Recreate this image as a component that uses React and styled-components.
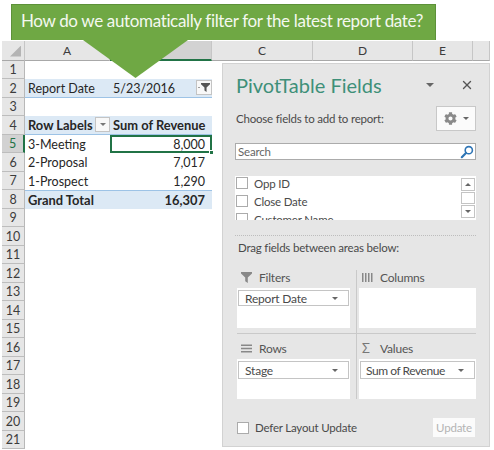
import React from 'react'
import styled, { createGlobalStyle } from 'styled-components'
import { X } from 'lucide-react'
import { FaCog } from 'react-icons/fa'

const Global = createGlobalStyle`
  html, body { margin: 0; padding: 0; background: #fff; }
  * { box-sizing: border-box; }
  body { font-family: "Lato", "Open Sans", sans-serif; color: #262626; }
`

const Page = styled.div`
  position: relative;
  width: 494px;
  height: 450px;
  overflow: hidden;
  background: #fff;
`

const Banner = styled.div`
  position: relative;
  z-index: 3;
  width: 425px;
  height: 36px;
  margin: 4px 0 1px 11px;
  padding: 0 0 4px 9px;
  display: flex;
  align-items: center;
  background: #6fa844;
  border: 1px solid #5d9139;
  border-bottom: none;
  color: #f4f8f0;
  font-size: 17px;
  letter-spacing: -0.35px;
  white-space: nowrap;
`

const Pointer = styled.div`
  position: absolute;
  left: 71px;
  top: 35px;
  width: 105px;
  height: 38px;
  background: #6fa844;
  clip-path: polygon(0 0, 100% 0, 50% 100%);
`

const Sheet = styled.div`
  position: relative;
  margin-left: 2px;
  width: 488px;
`

const HeaderRow = styled.div`
  display: flex;
  height: 19.5px;
`

const Corner = styled.div`
  position: relative;
  width: 23px;
  background: #e6e6e6;
  border-right: 1px solid #c6c6c6;
  border-bottom: 1px solid #a8a8a8;
  &::after {
    content: '';
    position: absolute;
    right: 3px;
    bottom: 3px;
    width: 11px;
    height: 11px;
    background: #b4b4b4;
    clip-path: polygon(100% 0, 100% 100%, 0 100%);
  }
`

const ColHead = styled.div`
  width: ${p => p.$w}px;
  display: flex;
  align-items: center;
  justify-content: center;
  font-size: 12px;
  color: #3c3c3c;
  background: ${p => (p.$active ? '#d2d2d2' : '#e6e6e6')};
  border-right: 1px solid #c6c6c6;
  border-bottom: ${p => (p.$active ? '2px solid #217346' : '1px solid #a8a8a8')};
`

const Row = styled.div`
  display: flex;
  height: 18.5px;
`

const RowNum = styled.div`
  width: 23px;
  padding-top: 1px;
  display: flex;
  align-items: center;
  justify-content: center;
  font-size: 12.5px;
  color: ${p => (p.$active ? '#217346' : '#3c3c3c')};
  background: ${p => (p.$active ? '#d2d2d2' : '#e6e6e6')};
  border-right: ${p => (p.$active ? '2px solid #217346' : '1px solid #b8b8b8')};
  border-bottom: 1px solid #bdbdbd;
`

const Band = styled.div`
  display: flex;
  width: 187px;
  background: ${p => (p.$band ? '#dce9f5' : 'transparent')};
  border-top: ${p => (p.$top ? '1px solid #9dc3e6' : 'none')};
  border-bottom: ${p => (p.$bottom ? '1px solid #9dc3e6' : 'none')};
  font-weight: ${p => (p.$bold ? 700 : 400)};
  font-size: ${p => (p.$bold ? '12.9px' : '12.5px')};
`

const Label = styled.div`
  position: relative;
  width: 85px;
  padding: 1px 0 0 3px;
  display: flex;
  align-items: center;
  white-space: nowrap;
`

const Value = styled.div`
  position: relative;
  width: 102px;
  padding: 1px ${p => (p.$num ? '7px' : '0')} 0 3px;
  display: flex;
  align-items: center;
  justify-content: ${p => (p.$num ? 'flex-end' : 'flex-start')};
  white-space: nowrap;
  outline: ${p => (p.$selected ? '2px solid #217346' : 'none')};
  outline-offset: -2px;
`

const Handle = styled.span`
  position: absolute;
  right: -2px;
  bottom: -2px;
  width: 5px;
  height: 5px;
  background: #217346;
  border: 1px solid #fff;
`

const FilterBtn = styled.span`
  position: absolute;
  right: 0;
  top: 1px;
  width: ${p => (p.$wide ? 16 : 15)}px;
  height: 15px;
  display: flex;
  align-items: center;
  justify-content: center;
  gap: 1px;
  background: #f8f8f8;
  border: 1px solid #c4c4c4;
`

const Panel = styled.aside`
  position: absolute;
  z-index: 2;
  left: 220px;
  top: 22px;
  width: 268px;
  height: 384px;
  padding: 9px 13px 0 12px;
  background: #e6e6e6;
  border: 1px solid #d2d2d2;
  color: #4a4a4a;
  font-size: 11.5px;
  letter-spacing: -0.2px;
`

const PanelHead = styled.div`
  display: flex;
  align-items: center;
  height: 24px;
  padding-left: 1px;
`

const Title = styled.h2`
  flex: 1;
  margin: 0;
  font-size: 20px;
  font-weight: 400;
  letter-spacing: 0;
  color: #3e9079;
`

const Caret = styled.span`
  display: block;
  flex: none;
  width: 0;
  height: 0;
  border-left: ${p => p.$s || 3.5}px solid transparent;
  border-right: ${p => p.$s || 3.5}px solid transparent;
  border-top: ${p => p.$s || 3.5}px solid ${p => p.$c || '#666'};
`

const HeadCaret = styled(Caret)`
  margin-right: 26px;
`

const CloseBtn = styled.span`
  display: flex;
  margin-right: 2px;
  color: #555;
`

const ChooseRow = styled.div`
  display: flex;
  align-items: center;
  justify-content: space-between;
  height: 25px;
  margin-top: 9px;
  padding-left: 1px;
`

const GearBtn = styled.div`
  width: 40px;
  height: 25px;
  display: flex;
  align-items: center;
  justify-content: center;
  gap: 6px;
  background: #fbfbfb;
  border: 1px solid #c8c8c8;
  color: #8a8a8a;
`

const SearchBox = styled.div`
  height: 17px;
  margin-top: 12px;
  padding: 0 1px 0 2px;
  display: flex;
  align-items: center;
  justify-content: space-between;
  background: #fff;
  border: 1px solid #ababab;
  color: #666;
`

const FieldList = styled.div`
  position: relative;
  height: 44px;
  margin-top: 16px;
  padding-top: 1px;
  display: flex;
  flex-direction: column;
  gap: 6px;
  background: #fff;
  overflow: hidden;
`

const FieldRow = styled.label`
  flex: none;
  display: flex;
  align-items: center;
  gap: 6px;
  height: 12px;
  padding-left: 1px;
`

const Check = styled.span`
  flex: none;
  display: block;
  width: 12px;
  height: 12px;
  background: #fff;
  border: 1px solid #ababab;
`

const Scroll = styled.div`
  position: absolute;
  right: 1px;
  top: 2px;
  width: 14px;
  height: 40px;
  display: flex;
  flex-direction: column;
  gap: 1px;
`

const ScrollBtn = styled.div`
  flex: 1;
  display: flex;
  align-items: center;
  justify-content: center;
  background: #fff;
  border: 1px solid #c4c4c4;
`

const UpCaret = styled(Caret)`
  transform: rotate(180deg);
`

const Dashed = styled.div`
  margin-top: 15px;
  border-top: 1px dotted #bdbdbd;
`

const DragText = styled.div`
  height: 16px;
  margin-top: 3px;
  padding-left: 3px;
  display: flex;
  align-items: center;
`

const Areas = styled.div`
  display: grid;
  grid-template-columns: 120px 119px;
  margin-top: 15px;
  margin-left: 2px;
`

const Area = styled.section`
  padding: ${p => (p.$lower ? '7px' : '0')} 0 ${p => (p.$lower ? '0' : '5px')} ${p => (p.$right ? '2px' : '0')};
  border-right: ${p => (p.$right ? 'none' : '1px solid #c9c9c9')};
  border-bottom: ${p => (p.$lower ? 'none' : '1px solid #c9c9c9')};
`

const AreaLabel = styled.div`
  height: 18px;
  padding: 0 0 4px ${p => (p.$right ? '3px' : '4px')};
  display: flex;
  align-items: center;
  gap: 7px;
  font-size: 12px;
  color: #555;
`

const AreaIcon = styled.svg`
  flex: none;
  display: block;
  width: 11px;
  height: 11px;
  fill: #888;
`

const Sigma = styled.span`
  width: 11px;
  font-size: 13px;
  line-height: 1;
  color: #777;
`

const AreaBox = styled.div`
  width: ${p => (p.$right ? '117px' : '113px')};
  height: 40px;
  padding: 2px 1px;
  background: #fff;
`

const Pill = styled.div`
  height: ${p => (p.$tall ? 18 : 16)}px;
  padding: 0 10px 0 ${p => (p.$tight ? 5 : 6)}px;
  display: flex;
  align-items: center;
  justify-content: space-between;
  font-size: 12px;
  letter-spacing: ${p => (p.$tight ? '-0.45px' : '-0.2px')};
  background: #fff;
  border: 1px solid #c4c4c4;
`

const Footer = styled.div`
  display: flex;
  align-items: center;
  justify-content: space-between;
  height: 19px;
  margin-top: 19px;
  margin-left: 2px;
`

const Defer = styled.label`
  display: flex;
  align-items: center;
  gap: 6px;
`

const UpdateBtn = styled.div`
  width: 42px;
  height: 19px;
  margin-right: 1px;
  display: flex;
  align-items: center;
  justify-content: center;
  background: #fbfbfb;
  color: #b4b4b4;
`

const Funnel = ({ size = 11, fill = '#888' }) => (
  <svg width={size} height={size} viewBox="0 0 12 12" style={{ display: 'block', flex: 'none' }}>
    <path d="M0 0h12v1.5L7.4 6v6L4.6 10V6L0 1.5z" fill={fill} />
  </svg>
)

const Magnifier = () => (
  <svg width="14" height="14" viewBox="0 0 14 14" fill="none">
    <circle cx="8.8" cy="5.2" r="3.6" stroke="#2f75b5" strokeWidth="1.6" />
    <path d="M6 8 1.8 12.2" stroke="#2f75b5" strokeWidth="2.2" strokeLinecap="round" />
  </svg>
)

const columns = [
  { name: 'A', w: 85 },
  { name: 'B', w: 102, active: true, blank: true },
  { name: 'C', w: 101 },
  { name: 'D', w: 100 },
  { name: 'E', w: 60 },
  { name: '', w: 17 },
]

const rows = [
  {},
  { band: true, bottom: true, label: 'Report Date', value: '5/23/2016', filter: 'value' },
  {},
  { band: true, bottom: true, bold: true, label: 'Row Labels', value: 'Sum of Revenue', filter: 'label' },
  { label: '3-Meeting', value: '8,000', num: true, selected: true },
  { label: '2-Proposal', value: '7,017', num: true },
  { label: '1-Prospect', value: '1,290', num: true },
  { band: true, top: true, bold: true, label: 'Grand Total', value: '16,307', num: true },
  ...Array.from({ length: 13 }, () => ({})),
]

function App() {
  return (
    <Page>
      <Global />
      <Banner>
        How do we automatically filter for the latest report date?
        <Pointer />
      </Banner>
      <Sheet>
        <HeaderRow>
          <Corner />
          {columns.map((c, i) => (
            <ColHead key={i} $w={c.w} $active={c.active}>{c.blank ? '' : c.name}</ColHead>
          ))}
        </HeaderRow>
        {rows.map((r, i) => (
          <Row key={i}>
            <RowNum $active={r.selected}>{i + 1}</RowNum>
            <Band $band={r.band} $top={r.top} $bottom={r.bottom} $bold={r.bold}>
              <Label>
                {r.label}
                {r.filter === 'label' && <FilterBtn><Caret $c="#777" /></FilterBtn>}
              </Label>
              <Value $num={r.num} $selected={r.selected}>
                {r.value}
                {r.filter === 'value' && (
                  <FilterBtn $wide><Caret $s={1.5} $c="#444" /><Funnel size={9} fill="#555" /></FilterBtn>
                )}
                {r.selected && <Handle />}
              </Value>
            </Band>
          </Row>
        ))}
        <Panel>
          <PanelHead>
            <Title>PivotTable Fields</Title>
            <HeadCaret $s={4} />
            <CloseBtn><X size={14} strokeWidth={2.4} /></CloseBtn>
          </PanelHead>
          <ChooseRow>
            Choose fields to add to report:
            <GearBtn><FaCog size={13} /><Caret /></GearBtn>
          </ChooseRow>
          <SearchBox>Search<Magnifier /></SearchBox>
          <FieldList>
            {['Opp ID', 'Close Date', 'Customer Name'].map(f => (
              <FieldRow key={f}><Check />{f}</FieldRow>
            ))}
            <Scroll>
              <ScrollBtn><UpCaret /></ScrollBtn>
              <ScrollBtn />
              <ScrollBtn><Caret /></ScrollBtn>
            </Scroll>
          </FieldList>
          <Dashed />
          <DragText>Drag fields between areas below:</DragText>
          <Areas>
            <Area>
              <AreaLabel><Funnel />Filters</AreaLabel>
              <AreaBox><Pill>Report Date<Caret /></Pill></AreaBox>
            </Area>
            <Area $right>
              <AreaLabel $right>
                <AreaIcon viewBox="0 0 11 11"><path d="M0 1h1.5v9H0zM3 1h1.5v9H3zM6 1h1.5v9H6zM9 1h1.5v9H9z" /></AreaIcon>
                Columns
              </AreaLabel>
              <AreaBox $right />
            </Area>
            <Area $lower>
              <AreaLabel>
                <AreaIcon viewBox="0 0 11 11"><path d="M0 1.5h11V3H0zM0 4.7h11v1.5H0zM0 8h11v1.5H0z" /></AreaIcon>
                Rows
              </AreaLabel>
              <AreaBox><Pill $tall>Stage<Caret /></Pill></AreaBox>
            </Area>
            <Area $lower $right>
              <AreaLabel $right><Sigma>Σ</Sigma>Values</AreaLabel>
              <AreaBox $right><Pill $tall $tight>Sum of Revenue<Caret /></Pill></AreaBox>
            </Area>
          </Areas>
          <Footer>
            <Defer><Check />Defer Layout Update</Defer>
            <UpdateBtn>Update</UpdateBtn>
          </Footer>
        </Panel>
      </Sheet>
    </Page>
  )
}

export default App
